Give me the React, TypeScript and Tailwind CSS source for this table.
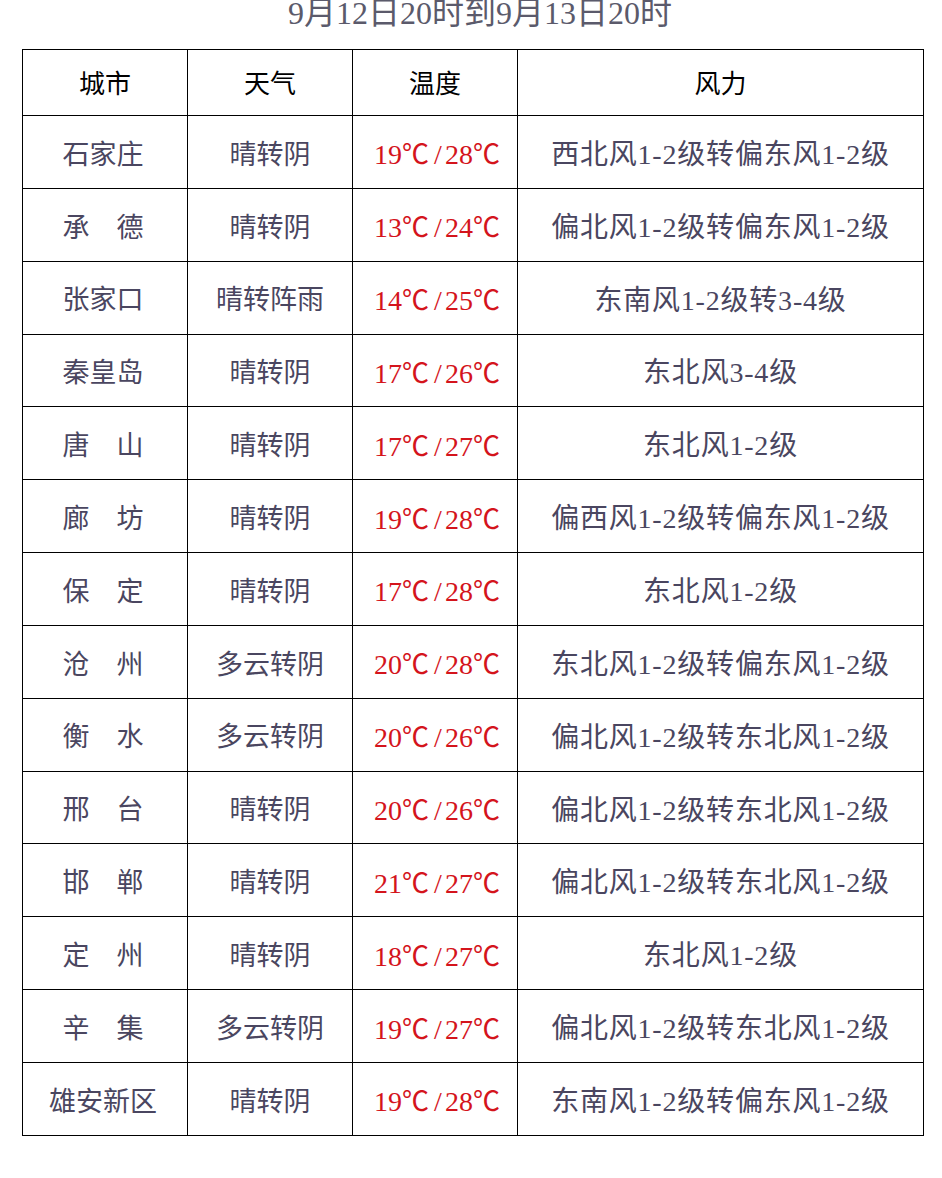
const rows: [string, string, [string, string], string][] = [
  ["石家庄", "晴转阴", ["19", "28"], "西北风1-2级转偏东风1-2级"],
  ["承\u3000德", "晴转阴", ["13", "24"], "偏北风1-2级转偏东风1-2级"],
  ["张家口", "晴转阵雨", ["14", "25"], "东南风1-2级转3-4级"],
  ["秦皇岛", "晴转阴", ["17", "26"], "东北风3-4级"],
  ["唐\u3000山", "晴转阴", ["17", "27"], "东北风1-2级"],
  ["廊\u3000坊", "晴转阴", ["19", "28"], "偏西风1-2级转偏东风1-2级"],
  ["保\u3000定", "晴转阴", ["17", "28"], "东北风1-2级"],
  ["沧\u3000州", "多云转阴", ["20", "28"], "东北风1-2级转偏东风1-2级"],
  ["衡\u3000水", "多云转阴", ["20", "26"], "偏北风1-2级转东北风1-2级"],
  ["邢\u3000台", "晴转阴", ["20", "26"], "偏北风1-2级转东北风1-2级"],
  ["邯\u3000郸", "晴转阴", ["21", "27"], "偏北风1-2级转东北风1-2级"],
  ["定\u3000州", "晴转阴", ["18", "27"], "东北风1-2级"],
  ["辛\u3000集", "多云转阴", ["19", "27"], "偏北风1-2级转东北风1-2级"],
  ["雄安新区", "晴转阴", ["19", "28"], "东南风1-2级转偏东风1-2级"],
];

const cjk = "font-['Noto_Sans_CJK_SC',sans-serif]";

export default function App() {
  return (
    <div className="w-[942px] h-[1178px] bg-white font-['Liberation_Serif','Noto_Sans_CJK_SC',serif]">
      <div className="h-[49px] flex justify-center pl-[18px] pt-[1px]">
        <p className="text-[32px] leading-none -mt-[4px] text-[#5b5a6b]">
          9月12日20时到9月13日20时
        </p>
      </div>
      <table className="ml-[22px] w-[901px] border-collapse table-fixed">
        <colgroup>
          <col className="w-[165px]" />
          <col className="w-[165px]" />
          <col className="w-[165px]" />
          <col className="w-[406px]" />
        </colgroup>
        <thead>
          <tr className="h-[66px]">
            {["城市", "天气", "温度", "风力"].map((h) => (
              <th
                key={h}
                className="border-[1.5px] border-black text-[26px] font-normal text-black text-center align-middle pt-[4px]"
              >
                {h}
              </th>
            ))}
          </tr>
        </thead>
        <tbody>
          {rows.map(([city, weather, temp, wind]) => (
            <tr key={city} className="h-[72.85px]">
              <td className="border-[1.5px] border-black text-center text-[27px] text-[#4a4660] pt-[6px] pr-[4px] whitespace-nowrap">
                {city}
              </td>
              <td className="border-[1.5px] border-black text-center text-[27px] text-[#4a4660] pt-[6px] whitespace-nowrap">
                {weather}
              </td>
              <td className="border-[1.5px] border-black text-center text-[28px] text-[#d4141c] pt-[6px] pl-[4px] whitespace-nowrap">
                {temp[0]}
                <span className={`${cjk} text-[27px]`}>℃</span>
                <span className="ml-[5px] mr-[3px]">/</span>
                {temp[1]}
                <span className={`${cjk} text-[27px]`}>℃</span>
              </td>
              <td className="border-[1.5px] border-black text-center text-[28px] text-[#4a4660] pt-[6px] whitespace-nowrap tracking-[0.8px]">
                {wind}
              </td>
            </tr>
          ))}
        </tbody>
      </table>
    </div>
  );
}
